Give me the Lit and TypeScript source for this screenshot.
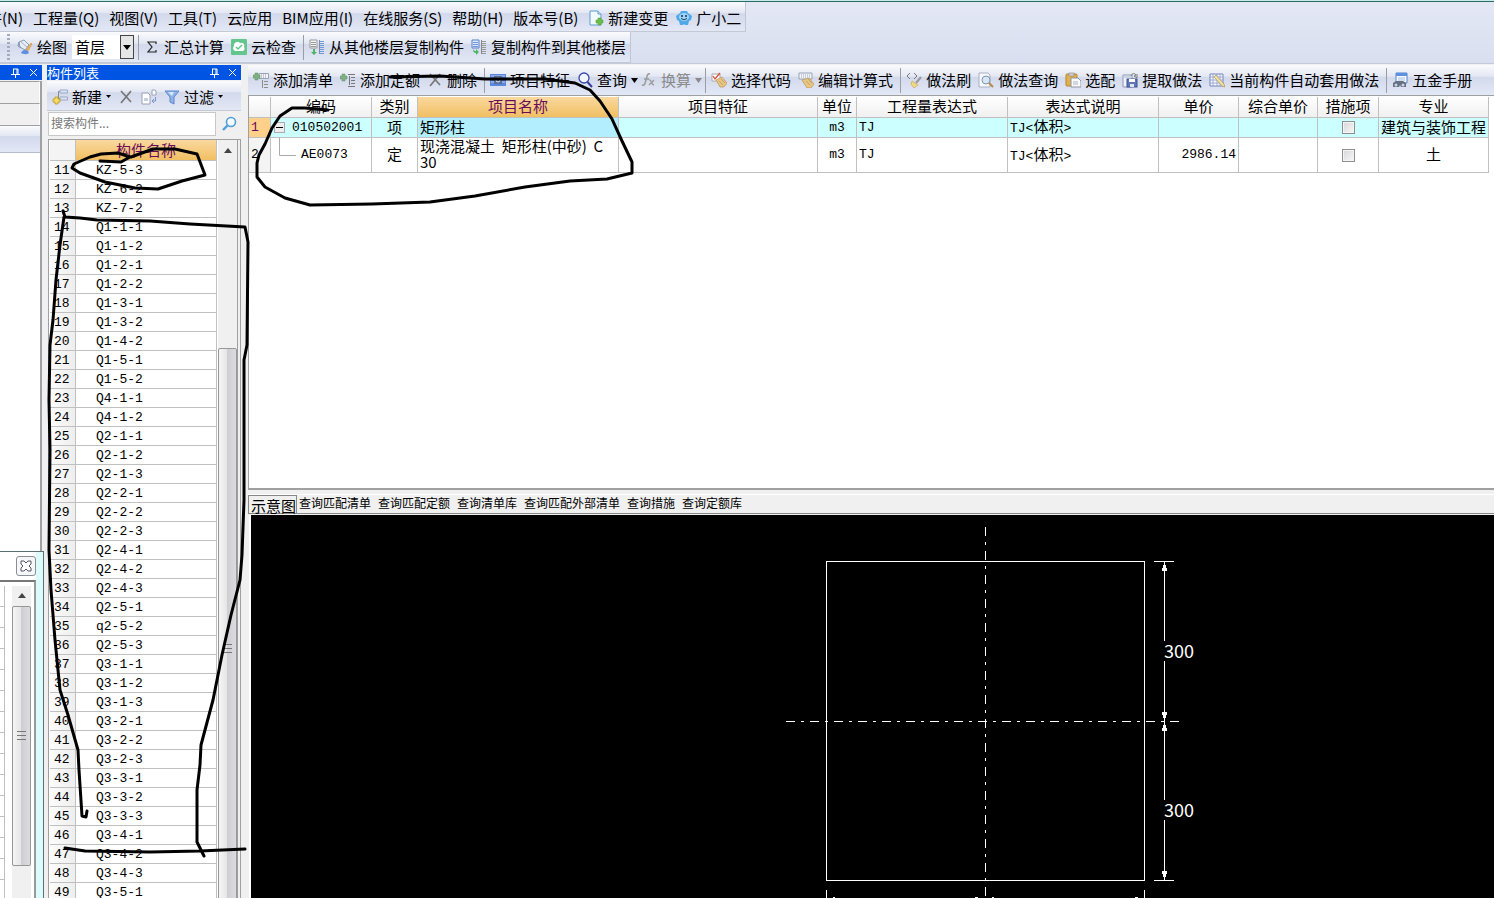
import { LitElement, html, svg, css, nothing } from "lit";
import { customElement } from "lit/decorators.js";
import { classMap } from "lit/directives/class-map.js";

const icons: Record<string, unknown> = {
  draw: svg`<path d="M2 3l5-2 5 5-4 5-5-3z" fill="#e9eef6" stroke="#8a9bb5"/><path d="M2 3l-1 4 3 2" fill="none" stroke="#7d90ad"/><path d="M4 3l6 5" stroke="#9fb0c9"/><path d="M14 4l1 1-4 7-2-1z" fill="#f3b04e" stroke="#c98a3b" stroke-width=".5"/><path d="M4 14c1-3 4-4 7-2l1 2c-3 2-6 1-8 0z" fill="#5f8fe0"/>`,
  sigma: svg`<path d="M12 5V3H4l4 5-4 5h8v-2" fill="none" stroke="#222" stroke-width="1.2"/>`,
  cloud: svg`<rect width="16" height="16" rx="1" fill="#63c68d"/><path d="M4 12a3 3 0 01-1-5 3.500 3.500 0 016-3 3 3 0 014 4 2.500 2.500 0 01-1 4z" fill="#fff"/><path d="M5 8l2 2 4-4" fill="none" stroke="#63c68d" stroke-width="1.500"/>`,
  copyFrom: svg`<path d="M1 1h7v8H1z" fill="#f4f5f7" stroke="#999"/><path d="M2 3.500h5M2 5.500h5M2 7.500h5" stroke="#999"/><path d="M11 2.500h4M11 4.500h4M11 6.500h4M11 8.500h4M11 10.500h4M11 12.500h4M11 14.500h4" stroke="#6d9bd8"/><path d="M10.500 1v14" stroke="#88a"/><path d="M4 10v3H2l3 3 3-3H6v-3z" fill="#4fb36a"/>`,
  copyTo: svg`<path d="M1 1h7v8H1z" fill="#dfeaff" stroke="#5b82c7"/><path d="M2 3.500h5M2 5.500h5M2 7.500h5" stroke="#6f95d8"/><path d="M11 2.500h4M11 4.500h4M11 6.500h4M11 8.500h4M11 10.500h4M11 12.500h4M11 14.500h4" stroke="#999"/><path d="M10.500 1v14" stroke="#888"/><path d="M2 10c0 3 1 4 3 4v2l3-3-3-3v2c-1 0-2 0-3-2z" fill="#4fb36a"/>`,
  newDoc: svg`<path d="M2 1h8l3 3v11H2z" fill="#f2f9ff" stroke="#5c9bd0"/><path d="M10 1v3h3" fill="#cfe6f8" stroke="#5c9bd0"/><path d="M10 8h3v2h2v3h-2v2h-3v-2H8v-3h2z" fill="#6cc04a" stroke="#4a9a2e" stroke-width=".5"/>`,
  mascot: svg`<path d="M4 3l1-2h6l1 2 4 3-1 4-2 1-1 4H9l-1-1-1 1H4l-1-4-2-1-1-4z" fill="#4ea9e6"/><ellipse cx="8" cy="7" rx="5" ry="4" fill="#9fd4f7"/><circle cx="6" cy="6" r="1" fill="#135"/><circle cx="10" cy="6" r="1" fill="#135"/><path d="M5 8.500q3 2.500 6 0" stroke="#135" fill="none" stroke-width=".9"/>`,
  addList: svg`<path d="M6 1.500h9.500v5H6z" fill="#f4f5f9" stroke="#98a2b5"/><path d="M8 3h1M10 3h1M12 3h1M8 5h1M10 5h1M12 5h1" stroke="#8a94aa"/><path d="M11 9.500h4M11 12.500h4M11 15.500h4M9.500 8v8" stroke="#8c8c8c" fill="none"/><path d="M2 1h3v2h2v3H5v2H2V6H0V3h2z" fill="#7fb083" stroke="#5e9165" stroke-width=".5"/>`,
  addQuota: svg`<path d="M8 2.500h7M11 5.500h4M11 8.500h4M11 11.500h4M8 14.500h7M9.500 4v9" stroke="#777" fill="none"/><path d="M2 2h3v2h2v3H5v2H2V7H0V4h2z" fill="#7fb083" stroke="#5e9165" stroke-width=".5"/>`,
  del: svg`<path d="M3 2l10 11M13 2L3 14" stroke="#777" stroke-width="1.700" fill="none"/>`,
  feature: svg`<rect y="2" width="16" height="12" fill="#5a86dc"/><path d="M1 4h14M1 7h3M12 7h3M1 10h3M12 10h3" stroke="#b8cdf5"/><rect x="4" y="4" width="8" height="8" fill="#5b6f96"/><circle cx="8" cy="8" r="2" fill="none" stroke="#e8eeff"/>`,
  find: svg`<circle cx="7" cy="6" r="5" fill="#f2f5ff" stroke="#3c46a8" stroke-width="1.300"/><path d="M10.500 10l4.500 5" stroke="#343c9e" stroke-width="2"/>`,
  fx: svg`<path d="M9 2c-3-1-3 3-4 6s-1 6-4 5M3 7h5" stroke="#9a9a9a" stroke-width="1.500" fill="none"/><path d="M8 8c3-1 2 5 5 5M13 8l-5 5" stroke="#9a9a9a" stroke-width="1.300" fill="none"/>`,
  pick: svg`<path d="M1 2h8v7H1z" fill="#fff" stroke="#aaa"/><path d="M2 4l2 3 5-6" stroke="#db4a3a" stroke-width="1.300" fill="none"/><path d="M5 8l6-3 5 6-3 4H9z" fill="#e7c583" stroke="#b8935a" stroke-width=".7"/><path d="M8 9l4 4M10 7l4 4" stroke="#b8935a" stroke-width=".7"/>`,
  edit: svg`<path d="M1 1h13v6H1z" fill="#f2f4f8" stroke="#98a2b5"/><path d="M3 3h9M3 5h9" stroke="#9aa5ba" stroke-dasharray="1 1"/><path d="M4 8l7-2 5 6-3 4H9z" fill="#e7c583" stroke="#b8935a" stroke-width=".7"/><path d="M8 9l4 4M10 7l4 4" stroke="#b8935a" stroke-width=".7"/>`,
  brush: svg`<path d="M4 1L1 4l3 3M8 1l3 3-3 3" stroke="#777" fill="none"/><path d="M15 5l-5 6" stroke="#999" stroke-width="2"/><path d="M6 9l6 4-4 3-3-4z" fill="#f0d88a" stroke="#c9a94e" stroke-width=".7"/>`,
  methodFind: svg`<path d="M1 1h9l2 2v12H1z" fill="#f6f8fc" stroke="#a5b0c5"/><circle cx="8" cy="8" r="4" fill="#d7e7f7" stroke="#8193ad"/><path d="M11 11l4 4" stroke="#b58a4c" stroke-width="2"/>`,
  paste: svg`<rect x="1" y="2" width="11" height="12" rx="1" fill="#e3b04e" stroke="#b5852d"/><rect x="4" y="1" width="5" height="3" fill="#ccd" stroke="#888" stroke-width=".6"/><path d="M6 6h7l3 3v6H6z" fill="#fafafa" stroke="#8b93a5"/><path d="M8 10h5M8 12h5" stroke="#a9b3c5"/>`,
  extract: svg`<path d="M1 3h9v12H1z" fill="#f0f3fa" stroke="#8a97b5"/><path d="M2 5h7" stroke="#a8b4cf"/><rect x="5" y="7" width="10" height="8" fill="#5f77b8" stroke="#3f5591"/><rect x="7" y="7" width="6" height="3" fill="#fff"/><rect x="8" y="12" width="4" height="3" fill="#dfe5f5"/><path d="M9 4c1-3 4-3 5-1l-2 1 3 2V2" fill="none" stroke="#777"/>`,
  auto: svg`<path d="M1 2h13v12H1z" fill="#f5f7fd" stroke="#7286bd"/><path d="M1 5h13M1 8h13M1 11h13M4 2v12M8 2v12M11 2v12" stroke="#8ea0d0" stroke-width=".8"/><path d="M5 5l8 9 3 1-1-3-8-9z" fill="#f0e0a6" stroke="#a08840" stroke-width=".6"/>`,
  book: svg`<path d="M4 1h11v10H4z" fill="#f5f8ff" stroke="#5585cf"/><path d="M4 1h11v3H4z" fill="#5d91e0"/><path d="M6 6h7M6 8h7" stroke="#a7bfe8"/><path d="M1 11l3-2h7l3 2v4H9l-1-2-1 2H1z" fill="#667083"/><circle cx="4" cy="13" r="1.500" fill="#cdd5e5"/><circle cx="11" cy="13" r="1.500" fill="#cdd5e5"/>`,
  create: svg`<path d="M8 2.500H6.500V10M8 9.500H6.500" stroke="#888" fill="none"/><path d="M8 1h7.500v3H8zM8 8h7.500v3H8z" fill="#dce4f3" stroke="#9aa9c6"/><path d="M3 8h3v2h2v3H6v2H3v-2H1v-3h2z" fill="#f6dc62" stroke="#bd962e" stroke-width=".8"/>`,
  copy: svg`<path d="M1 4h6l2 2v9H1z" fill="#fff" stroke="#9aa2b5"/><path d="M3 9h4v3H3z" fill="#c8d0e0"/><path d="M11 1h3l1 1v4h-4z" fill="#fff" stroke="#9aa2b5"/><path d="M14.500 8v4H11M13 10l-2 2 2 2" stroke="#7893cf" fill="none"/>`,
  filter: svg`<path d="M1 2h14L10 8v7l-4-2V8z" fill="#8fb2ea" stroke="#5c86cb"/><path d="M4 3h6L8 7z" fill="#d8e6fb"/>`,
  lens: svg`<circle cx="10" cy="6" r="4.500" fill="#f5fbff" stroke="#4f9fdb" stroke-width="1.600"/><path d="M6.500 9.500L2 14" stroke="#4f9fdb" stroke-width="2.400"/>`,
};

const icon = (name: string) =>
  html`<svg class="icon" viewBox="0 0 16 16" aria-hidden="true">${icons[name]}</svg>`;
const caret = (size: number) =>
  html`<svg class="caret" width=${size} height=${size > 6 ? 5 : 3} viewBox="0 0 8 5" preserveAspectRatio="none" aria-hidden="true"><path d="M0 0h8L4 5z" fill="currentColor"/></svg>`;

const shared = css`
  :host { display: block; min-width: 0; min-height: 0; font: 15px/20px "Noto Sans CJK SC", sans-serif; color: #000; }
  * { box-sizing: border-box; }
  button { font: inherit; color: inherit; background: none; border: 0; padding: 0; margin: 0; display: flex; align-items: center; white-space: nowrap; flex: none; }
  svg { display: block; flex: none; }
  .icon { width: 16px; height: 16px; }
  .bar { display: flex; align-items: center; background: linear-gradient(#fafbfd, #e3e7f3 38%, #d2d9eb 40%, #e3e8f6); }
  .tool { gap: 4px; margin-right: 7px; }
  .tool.drop { margin-right: 3px; }
  .tool:disabled { color: #8a8a8a; }
  .sep { width: 1px; height: 25px; background: #9b9da5; margin-right: 5px; flex: none; }
  .title { height: 15px; background: #0054e3; color: #fff; display: flex; align-items: center; font-size: 13px; line-height: 15px; }
  .title h2 { font: inherit; margin: 0; flex: 1; }
  .title button { width: 18px; height: 15px; justify-content: center; }
  table { border-collapse: separate; border-spacing: 0; table-layout: fixed; }
  th, td { padding: 0; font-weight: 400; border-right: 1px solid #c0c0c0; border-bottom: 1px solid #c0c0c0; }
  .mono { font: 13px/16px "Liberation Mono", "Noto Sans CJK SC", monospace; }
  .track { background: #f0f0f0; display: flex; flex-direction: column; align-items: center; }
  .track .up { width: 100%; height: 20px; justify-content: center; }
  .thumb { width: 100%; border: 1px solid #979797; border-radius: 2px; background: linear-gradient(90deg, #f5f5f5, #e6e6e8 45%, #cfcfd3 50%, #dcdce0); display: flex; align-items: center; justify-content: center; }
`;

const titleButtons = html`
  <button aria-label="固定"><svg width="9" height="10" viewBox="0 0 9 10"><path d="M2 1h5M2.500 1v5M6 1v5M7 1v5M0 6.500h9M4.500 6v4" stroke="#fff" fill="none"/></svg></button>
  <button aria-label="关闭"><svg width="9" height="9" viewBox="0 0 9 9"><path d="M1 1l7 7M8 1L1 8" stroke="#fff" fill="none"/></svg></button>`;
const upArrow = html`<svg width="8" height="5" viewBox="0 0 8 5"><path d="M0 5h8L4 0z" fill="#444"/></svg>`;
const grip = html`<svg width="9" height="9" viewBox="0 0 9 9"><path d="M0 .5h9M0 4.500h9M0 8.500h9" stroke="#777"/></svg>`;

@customElement("menu-area")
class MenuArea extends LitElement {
  static styles = [shared, css`
    :host { background: linear-gradient(#e4e8f5, #d9dff0); border-top: 1px solid #c9eae8; border-bottom: 1px solid #c3cadb; }
    .menu-row { border-top: 1px solid #2d6b66; }
    nav, .tools { width: fit-content; border-right: 1px solid #c2c6d2; border-bottom: 1px solid #c5c9d6; }
    nav { height: 30px; gap: 10px; padding: 2px 4px 0 0; }
    .cut { width: 23px; overflow: hidden; justify-content: flex-end; }
    .with-icon { gap: 4px; }
    .with-icon + .with-icon { margin-left: -2px; }
    .tools { height: 31px; padding-left: 7px; }
    .handle { width: 3px; height: 26px; margin-right: 7px; background: repeating-linear-gradient(#a6abb9 0 2px, transparent 2px 4px); }
    .floor { position: relative; width: 62px; height: 24px; margin: 0 4px 0 -2px; background: #fff; display: flex; }
    select { appearance: none; font: inherit; line-height: 24px; border: 0; background: none; color: #000; padding: 0 0 0 3px; width: 100%; }
    .arrow { position: absolute; right: 0; top: 0; width: 14px; height: 24px; background: #e6e6e6; border: 1px solid #444; display: grid; place-items: center; pointer-events: none; }
    .last { margin-right: 4px; }
  `];
  render() {
    const menus = ["工程量(Q)", "视图(V)", "工具(T)", "云应用", "BIM应用(I)", "在线服务(S)", "帮助(H)", "版本号(B)"];
    return html`
      <div class="menu-row"><nav class="bar">
        <button class="cut">构件(N)</button>
        ${menus.map((m) => html`<button>${m}</button>`)}
        <button class="with-icon">${icon("newDoc")}新建变更</button>
        <button class="with-icon">${icon("mascot")}广小二</button>
      </nav></div>
      <div class="tools bar">
        <span class="handle"></span>
        <button class="tool">${icon("draw")}绘图</button>
        <span class="floor">
          <select aria-label="楼层"><option>首层</option></select>
          <span class="arrow">${caret(8)}</span>
        </span>
        <span class="sep"></span>
        <button class="tool">${icon("sigma")}汇总计算</button>
        <button class="tool">${icon("cloud")}云检查</button>
        <span class="sep"></span>
        <button class="tool">${icon("copyFrom")}从其他楼层复制构件</button>
        <button class="tool last">${icon("copyTo")}复制构件到其他楼层</button>
      </div>`;
  }
}

@customElement("side-dock")
class SideDock extends LitElement {
  static styles = [shared, css`
    :host { display: grid; grid-template-rows: minmax(0, 7fr) minmax(0, 5fr); }
    .dock { display: flex; flex-direction: column; margin-right: 2px; }
    .title { justify-content: flex-end; }
    .body { flex: 1; margin: 1px 0 0; border-right: 2px solid #a0a0a8; background: #fff; display: flex; flex-direction: column; }
    .line { height: 22px; background: #f0f0f0; border-top: 1px solid #a0a0a0; border-right: 1px solid #fff; }
    .shade { height: 28px; border-top: 1px solid #a0a0a0; border-bottom: 1px solid #b5bbc9; }
    .window { border-top: 1px solid #5e6f72; border-right: 1px solid #5e6f72; background: #dcfcfc; padding-right: 7px; display: flex; flex-direction: column; overflow: hidden; }
    .head { height: 28px; display: flex; align-items: center; justify-content: flex-end; background: #fff; flex: none; }
    .close { width: 20px; height: 20px; border: 1px solid #8a8f96; border-radius: 3px; background: #f6f7f9; justify-content: center; }
    .content { flex: 1; min-height: 0; display: flex; border-top: 2px solid #777; border-right: 2px solid #999; padding-top: 4px; background: #fff; }
    .cells { width: 5px; border-right: 1px solid #c0c0c0; background: repeating-linear-gradient(#fff 0 20px, #c0c0c0 20px 21px); margin-right: 7px; }
    .track { width: 19px; }
    .thumb { height: 260px; }
  `];
  render() {
    return html`
      <section class="dock">
        <div class="title">${titleButtons}</div>
        <div class="body"><div class="line"></div><div class="line"></div><div class="shade bar"></div></div>
      </section>
      <section class="window">
        <div class="head"><button class="close" aria-label="关闭窗口"><svg width="12" height="12" viewBox="0 0 12 12"><path d="M1 1h3l2 2 2-2h3v3L9 6l2 2v3H8L6 9l-2 2H1V8l2-2-2-2z" fill="#fff" stroke="#556"/></svg></button></div>
        <div class="content">
          <div class="cells"></div>
          <div class="track"><button class="up" aria-label="向上滚动">${upArrow}</button><div class="thumb">${grip}</div></div>
        </div>
      </section>`;
  }
}

const components =
  "KZ-5-3 KZ-6-2 KZ-7-2 Q1-1-1 Q1-1-2 Q1-2-1 Q1-2-2 Q1-3-1 Q1-3-2 Q1-4-2 Q1-5-1 Q1-5-2 Q4-1-1 Q4-1-2 Q2-1-1 Q2-1-2 Q2-1-3 Q2-2-1 Q2-2-2 Q2-2-3 Q2-4-1 Q2-4-2 Q2-4-3 Q2-5-1 q2-5-2 Q2-5-3 Q3-1-1 Q3-1-2 Q3-1-3 Q3-2-1 Q3-2-2 Q3-2-3 Q3-3-1 Q3-3-2 Q3-3-3 Q3-4-1 Q3-4-2 Q3-4-3 Q3-5-1".split(" ");

@customElement("component-list")
class ComponentList extends LitElement {
  static styles = [shared, css`
    :host { display: flex; flex-direction: column; }
    .tools { height: 30px; margin-top: 1px; padding: 2px 0 0 5px; border-bottom: 1px solid #c5c9d6; flex: none; }
    .search { display: flex; height: 26px; margin: 0 0 2px 1px; align-items: center; flex: none; }
    input { width: 168px; height: 24px; border: 1px solid #c8c8c8; padding: 0 0 4px 2px; font: 12px/18px "Noto Sans CJK SC", sans-serif; background: #fff; outline: 0; }
    input::placeholder { color: #777; opacity: 1; }
    .search button { flex: 1; justify-content: center; }
    .frame { flex: 1; min-height: 0; display: flex; margin-left: 1px; border: solid #a0a0a0; border-width: 1px 1px 0; overflow: hidden; background: #fff; }
    .list { flex: 1; min-width: 0; border-left: 1px solid #fff; }
    table { width: 100%; }
    .num { width: 26px; }
    th, .num { background: #f4f4f4; }
    th { height: 21px; line-height: 18px; }
    th.name { background: linear-gradient(#f9d99f, #f1bf62); color: #6b0a5b; }
    td { height: 19px; padding-top: 2px; }
    td.num { padding-left: 4px; background: linear-gradient(90deg, #fcfcfc, #eee); }
    td.name { padding-left: 20px; }
    .track { width: 19px; margin-left: 1px; }
    .thumb { height: 600px; margin-top: 188px; flex: none; }
    .edge { width: 3px; background: #f0f0f0; border-left: 1px solid #a0a0a0; }
    .tool.tight { gap: 4px; }
  `];
  render() {
    return html`
      <div class="title"><h2>构件列表</h2>${titleButtons}</div>
      <div class="tools bar">
        <button class="tool tight">${icon("create")}新建${caret(5)}</button>
        <button class="tool" aria-label="删除">${icon("del")}</button>
        <button class="tool" aria-label="复制">${icon("copy")}</button>
        <button class="tool tight">${icon("filter")}过滤${caret(5)}</button>
      </div>
      <div class="search"><input type="text" placeholder="搜索构件..." aria-label="搜索构件"><button aria-label="搜索">${icon("lens")}</button></div>
      <div class="frame">
        <div class="list"><table>
          <thead><tr><th class="num"></th><th class="name">构件名称</th></tr></thead>
          <tbody>${components.map((c, i) => html`<tr><td class="num mono">${i + 11}</td><td class="name mono">${c}</td></tr>`)}</tbody>
        </table></div>
        <div class="track"><button class="up" aria-label="向上滚动">${upArrow}</button><div class="thumb">${grip}</div></div>
        <div class="edge"></div>
      </div>`;
  }
}

const tools: Array<{ i: string; t: string; drop?: boolean; off?: boolean } | null> = [
  { i: "addList", t: "添加清单" }, { i: "addQuota", t: "添加定额" }, { i: "del", t: "删除" }, null,
  { i: "feature", t: "项目特征" }, { i: "find", t: "查询", drop: true }, { i: "fx", t: "换算", drop: true, off: true }, null,
  { i: "pick", t: "选择代码" }, { i: "edit", t: "编辑计算式" }, null,
  { i: "brush", t: "做法刷" }, { i: "methodFind", t: "做法查询" }, { i: "paste", t: "选配" }, { i: "extract", t: "提取做法" },
  { i: "auto", t: "当前构件自动套用做法" }, null, { i: "book", t: "五金手册" },
];

@customElement("method-pane")
class MethodPane extends LitElement {
  static styles = [shared, css`
    :host { display: flex; flex-direction: column; overflow: hidden; }
    .tools { height: 31px; padding-left: 5px; border-bottom: 1px solid #a0a0a0; flex: none; }
    .sheet { flex: 1; background: #fff; border-left: 1px solid #a0a0a0; border-bottom: 2px solid #a0a0a0; padding: 1px 5px 0 0; }
    table { width: 100%; }
    th { height: 21px; line-height: 18px; padding-bottom: 2px; background: linear-gradient(#fff, #f0f0f0); }
    td { text-align: center; line-height: 16px; padding-bottom: 2px; }
    td.mono { padding-bottom: 0; }
    .n { width: 22px; } .code { width: 101px; } .kind { width: 46px; } .name { width: 201px; }
    .unit { width: 39px; } .expr { width: 151px; } .price { width: 80px; } .total { width: 79px; } .step { width: 61px; } .major { width: 110px; }
    th.name { background: linear-gradient(#f9d99f, #f1bf62); color: #6b0a5b; }
    .first td { height: 20px; background: #ccffff; }
    .second td { height: 35px; }
    td.n { background: #f4f4f4; text-align: left; padding-left: 2px; }
    .first td.n { background: #ffd08a; color: #6b0a5b; }
    .first td.name { background: #b3eeff; }
    td.name, td.left { text-align: left; padding-left: 2px; }
    td.right { text-align: right; padding-right: 2px; }
    td.tick { padding: 0; }
    .node { display: flex; align-items: center; }
    .node svg { margin: 0 7px 0 3px; }
    .node .branch { margin: 0 5px 16px 8px; }
    .cjk { font: 15px/16px "Noto Sans CJK SC", sans-serif; }
    input { appearance: none; display: block; width: 13px; height: 13px; margin: 0 auto; border: 1px solid #8e8f8f; background: linear-gradient(135deg, #d6d6da, #f8f8f8); box-shadow: inset 0 0 0 1px #f4f4f4; }
  `];
  render() {
    return html`
      <div class="tools bar">${tools.map((t) => t
        ? html`<button class=${classMap({ tool: true, drop: !!t.drop })} ?disabled=${!!t.off}>${icon(t.i)}${t.t}${t.drop ? caret(7) : nothing}</button>`
        : html`<span class="sep"></span>`)}</div>
      <div class="sheet"><table>
        <thead><tr>
          <th class="n"></th><th class="code">编码</th><th class="kind">类别</th><th class="name">项目名称</th><th>项目特征</th>
          <th class="unit">单位</th><th class="expr">工程量表达式</th><th class="expr">表达式说明</th><th class="price">单价</th>
          <th class="total">综合单价</th><th class="step">措施项</th><th class="major">专业</th>
        </tr></thead>
        <tbody>
          <tr class="first">
            <td class="n mono">1</td>
            <td class="mono"><span class="node"><svg width="11" height="13" viewBox="0 0 11 13"><rect x=".5" y="1.500" width="10" height="10" fill="#eee" stroke="#aaa"/><path d="M2 6.500h7" stroke="#000"/></svg>010502001</span></td>
            <td>项</td><td class="name">矩形柱</td><td></td><td class="mono">m3</td><td class="left mono">TJ</td>
            <td class="left mono">TJ&lt;<span class="cjk">体积</span>&gt;</td><td></td><td></td>
            <td class="tick"><input type="checkbox" aria-label="措施项 1"></td><td>建筑与装饰工程</td>
          </tr>
          <tr class="second">
            <td class="n mono">2</td>
            <td class="mono"><span class="node"><svg class="branch" width="17" height="18" viewBox="0 0 17 18"><path d="M.5 0v17.500H17" stroke="#aaa" fill="none"/></svg>AE0073</span></td>
            <td>定</td><td class="name">现浇混凝土&nbsp; 矩形柱(中砂)&nbsp; C<br>30</td><td></td><td class="mono">m3</td><td class="left mono">TJ</td>
            <td class="left mono">TJ&lt;<span class="cjk">体积</span>&gt;</td><td class="right mono">2986.14</td><td></td>
            <td class="tick"><input type="checkbox" aria-label="措施项 2"></td><td>土</td>
          </tr>
        </tbody>
      </table></div>`;
  }
}

@customElement("sketch-pane")
class SketchPane extends LitElement {
  static styles = [shared, css`
    :host { display: flex; flex-direction: column; }
    .tabs { display: flex; height: 20px; margin-top: 4px; gap: 7px; border-bottom: 1px solid #888; border-top: 1px solid #fff; font-size: 12px; line-height: 16px; flex: none; align-items: flex-start; }
    .tabs .active { font-size: 15px; line-height: 18px; height: 19px; padding: 2px 0 0 2px; margin-right: -5px; border: 1px solid #888; border-bottom: 0; }
    .canvas { flex: 1; min-height: 0; margin: 1px 0 0 1px; border-left: 2px solid #fff; background: #000; display: flex; justify-content: center; overflow: hidden; }
    .canvas svg { width: 1243px; height: 383px; shape-rendering: crispEdges; }
    .canvas text { fill: #fff; font: 18px "Noto Sans CJK SC", sans-serif; }
  `];
  render() {
    const tabs = ["查询匹配清单", "查询匹配定额", "查询清单库", "查询匹配外部清单", "查询措施", "查询定额库"];
    return html`
      <div class="tabs"><button class="active">示意图</button>${tabs.map((t) => html`<button>${t}</button>`)}</div>
      <div class="canvas"><svg viewBox="0 0 1243 383" fill="none" stroke="#fff" role="img" aria-label="矩形柱示意图">
        <rect x="575.500" y="46.500" width="318" height="319"/>
        <path d="M734.500 12V383M535 206.500H928" stroke-dasharray="9 6 3 6"/>
        <path d="M903 46.500h20M903 365.500h20M913.500 47v79M913.500 146v139M913.500 305v60M575.500 375v8M893.500 375v8"/>
        <path d="M913.500 47l3 9h-6zM913.500 206l3-9h-6zM913.500 207l3 9h-6zM913.500 365l3-9h-6z" fill="#fff" stroke="none"/>
        <path d="M582 382.500h2M724 382.500h3M741 382.500h2M884 382.500h3"/>
        <g stroke="none"><text x="913" y="143">300</text><text x="913" y="302">300</text></g>
      </svg></div>`;
  }
}

@customElement("app-root")
class AppRoot extends LitElement {
  static styles = css`
    :host { position: relative; display: flex; flex-direction: column; height: 100vh; overflow: hidden; background: #f0f0f0; }
    menu-area { flex: none; margin-bottom: 1px; }
    .work { flex: 1; min-height: 0; display: grid; grid-template-columns: 44px 194px minmax(0, 1fr); grid-template-rows: minmax(0, 1fr); column-gap: 3px; }
    .main { margin-left: 4px; display: grid; grid-template-rows: minmax(0, 51fr) minmax(0, 49fr); min-width: 0; }
    .ink { position: absolute; left: 0; top: 0; width: 700px; height: 898px; pointer-events: none; }
  `;
  render() {
    return html`
      <menu-area></menu-area>
      <div class="work">
        <side-dock></side-dock>
        <component-list></component-list>
        <div class="main"><method-pane></method-pane><sketch-pane></sketch-pane></div>
      </div>
      <svg class="ink" viewBox="0 0 700 898" fill="none" stroke="#000" stroke-width="3" stroke-linejoin="round" stroke-linecap="round" aria-hidden="true">
        <path d="M100 161L121 162 130 157 118 153 101 154 90 157 74 164 72 168 80 173 105 182 135 188 158 189 182 181 205 175 197 154 175 149 153 149 131 157"/>
        <path d="M328 110L305 108 292 108 280 116 272 128 265 144 259 155 257 163 257 177 265 187 285 198 310 205 372 204 430 202 475 196 525 187 570 181 607 179 632 173 632 162 622 141 612 119 600 101 590 90 575 83 545 79 485 79 440 76 390 77"/>
        <path d="M63 211L65 217 80 218 97 220 150 221 190 224 245 227 248 242 247 345 244 360 244 500 242 555 240 580 231 615 222 655 213 700 201 745 200 765 197 790 197 842 204 856"/>
        <path d="M64 217L60 245 56 280 53 320 50 345 49 400 50 450 49 550 51 590 55 640 60 690 68 715 78 750 79 770 82 816 86 817 87 811"/>
        <path d="M65 848L85 851 150 852 200 851 245 849"/>
      </svg>`;
  }
}
